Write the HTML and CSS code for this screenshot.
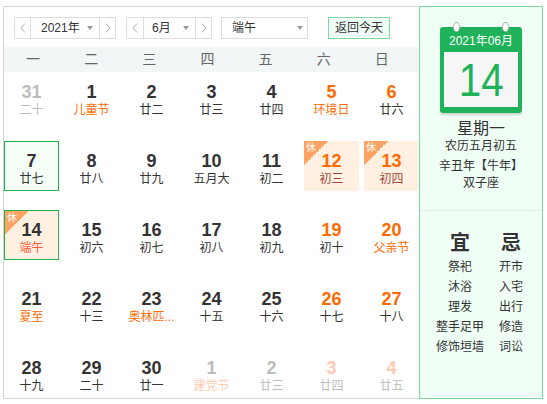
FILE: index.html
```html
<!DOCTYPE html>
<html lang="zh-CN">
<head>
<meta charset="utf-8">
<title>万年历</title>
<link rel="stylesheet" href="styles.css">
</head>
<body>
<div class="cal">
  <div class="main">
    <div class="toolbar">
      <div class="group year">
        <span class="arrow"><svg width="6" height="10" viewBox="0 0 6 10"><polyline points="5,0.5 1,5 5,9.5" fill="none" stroke="#aaa" stroke-width="1"/></svg></span>
        <span class="sel"><span>2021年</span><span class="caret"></span></span>
        <span class="arrow"><svg width="6" height="10" viewBox="0 0 6 10"><polyline points="1,0.5 5,5 1,9.5" fill="none" stroke="#aaa" stroke-width="1"/></svg></span>
      </div>
      <div class="group month">
        <span class="arrow wide"><svg width="6" height="10" viewBox="0 0 6 10"><polyline points="5,0.5 1,5 5,9.5" fill="none" stroke="#aaa" stroke-width="1"/></svg></span>
        <span class="sel"><span>6月</span><span class="caret"></span></span>
        <span class="arrow"><svg width="6" height="10" viewBox="0 0 6 10"><polyline points="1,0.5 5,5 1,9.5" fill="none" stroke="#aaa" stroke-width="1"/></svg></span>
      </div>
      <div class="festival"><span>端午</span><span class="caret"></span></div>
      <div class="today-btn">返回今天</div>
    </div>
    <div class="week">
      <span>一</span><span>二</span><span>三</span><span>四</span><span>五</span><span>六</span><span>日</span>
    </div>
    <div class="grid">
      <div class="day other"><span class="num">31</span><span class="lunar">二十</span></div>
      <div class="day fest"><span class="num">1</span><span class="lunar">儿童节</span></div>
      <div class="day"><span class="num">2</span><span class="lunar">廿二</span></div>
      <div class="day"><span class="num">3</span><span class="lunar">廿三</span></div>
      <div class="day"><span class="num">4</span><span class="lunar">廿四</span></div>
      <div class="day we fest"><span class="num">5</span><span class="lunar">环境日</span></div>
      <div class="day we"><span class="num">6</span><span class="lunar">廿六</span></div>

      <div class="day today"><span class="num">7</span><span class="lunar">廿七</span></div>
      <div class="day"><span class="num">8</span><span class="lunar">廿八</span></div>
      <div class="day"><span class="num">9</span><span class="lunar">廿九</span></div>
      <div class="day"><span class="num">10</span><span class="lunar">五月大</span></div>
      <div class="day"><span class="num">11</span><span class="lunar">初二</span></div>
      <div class="day we rest"><span class="badge">休</span><span class="num">12</span><span class="lunar">初三</span></div>
      <div class="day we rest"><span class="badge">休</span><span class="num">13</span><span class="lunar">初四</span></div>

      <div class="day rest picked fest"><span class="badge">休</span><span class="num">14</span><span class="lunar">端午</span></div>
      <div class="day"><span class="num">15</span><span class="lunar">初六</span></div>
      <div class="day"><span class="num">16</span><span class="lunar">初七</span></div>
      <div class="day"><span class="num">17</span><span class="lunar">初八</span></div>
      <div class="day"><span class="num">18</span><span class="lunar">初九</span></div>
      <div class="day we"><span class="num">19</span><span class="lunar">初十</span></div>
      <div class="day we fest"><span class="num">20</span><span class="lunar">父亲节</span></div>

      <div class="day fest"><span class="num">21</span><span class="lunar">夏至</span></div>
      <div class="day"><span class="num">22</span><span class="lunar">十三</span></div>
      <div class="day fest"><span class="num">23</span><span class="lunar" title="奥林匹克日">奥林匹...</span></div>
      <div class="day"><span class="num">24</span><span class="lunar">十五</span></div>
      <div class="day"><span class="num">25</span><span class="lunar">十六</span></div>
      <div class="day we"><span class="num">26</span><span class="lunar">十七</span></div>
      <div class="day we"><span class="num">27</span><span class="lunar">十八</span></div>

      <div class="day"><span class="num">28</span><span class="lunar">十九</span></div>
      <div class="day"><span class="num">29</span><span class="lunar">二十</span></div>
      <div class="day"><span class="num">30</span><span class="lunar">廿一</span></div>
      <div class="day other fest"><span class="num">1</span><span class="lunar">建党节</span></div>
      <div class="day other"><span class="num">2</span><span class="lunar">廿三</span></div>
      <div class="day other we"><span class="num">3</span><span class="lunar">廿四</span></div>
      <div class="day other we"><span class="num">4</span><span class="lunar">廿五</span></div>
    </div>
  </div>
  <div class="side">
    <div class="side-top">
      <div class="pcal">
        <span class="ring ring-l"></span>
        <span class="ring ring-r"></span>
        <div class="pcal-head">2021年06月</div>
        <div class="pcal-body"><span class="big">14</span></div>
      </div>
      <div class="weekday">星期一</div>
      <div class="info first">农历五月初五</div>
      <div class="info ganzhi">辛丑年【牛年】</div>
      <div class="info zodiac">双子座</div>
    </div>
    <div class="side-bottom">
      <div class="yj yi">
        <div class="yj-title">宜</div>
        <div class="yj-list">
          <div>祭祀</div><div>沐浴</div><div>理发</div><div>整手足甲</div><div>修饰垣墙</div>
        </div>
      </div>
      <div class="yj ji">
        <div class="yj-title">忌</div>
        <div class="yj-list">
          <div>开市</div><div>入宅</div><div>出行</div><div>修造</div><div>词讼</div>
        </div>
      </div>
    </div>
  </div>
</div>
</body>
</html>
```
FILE: styles.css
```css
body {
  margin: 0;
  background: #fff;
  color: #333;
  font-family: "Liberation Sans", "Noto Sans CJK SC", sans-serif;
}

.cal {
  display: flex;
  margin: 6px 0 0 3px;
  width: 539px;
  height: 391px;
  border: 1px solid #d4d4d4;
  border-right: 0;
}

.main {
  width: 415px;
  height: 391px;
  overflow: hidden;
}

/* toolbar */
.toolbar {
  display: flex;
  align-items: center;
  height: 22px;
  margin: 10px 0 8px 10px;
  font-size: 12px;
}

.group {
  display: flex;
  height: 22px;
  box-sizing: border-box;
  border: 1px solid #dddddd;
  background: #fff;
}

.arrow {
  width: 15px;
  display: flex;
  align-items: center;
  justify-content: center;
}

.arrow.wide {
  width: 16px;
}

.sel,
.festival {
  display: flex;
  align-items: center;
  justify-content: space-between;
  box-sizing: border-box;
  padding: 0 6px 0 10px;
  line-height: 20px;
  color: #333;
}

.sel {
  border-left: 1px solid #dddddd;
  border-right: 1px solid #dddddd;
}

.year .sel {
  width: 70px;
}

.month {
  margin-left: 10px;
}

.month .sel {
  width: 53px;
  padding-left: 8px;
}

.festival {
  width: 87px;
  height: 22px;
  margin-left: 9px;
  border: 1px solid #dddddd;
  padding-right: 4px;
}

.caret {
  width: 0;
  height: 0;
  border-left: 3px solid transparent;
  border-right: 3px solid transparent;
  border-top: 4px solid #9a9a9a;
}

.today-btn {
  margin-left: 20px;
  width: 62px;
  height: 22px;
  box-sizing: border-box;
  border: 1px solid #80d9a3;
  background: #f2fff6;
  text-align: center;
  line-height: 20px;
  font-size: 12px;
  color: #333;
}

/* weekday header */
.week {
  display: grid;
  grid-template-columns: repeat(7, 58.14px);
  height: 25px;
  align-items: center;
  background: #f2f6f6;
  font-size: 14px;
  color: #666;
  text-align: center;
  line-height: 25px;
}

/* day grid */
.grid {
  display: grid;
  grid-template-columns: repeat(7, 55px);
  grid-auto-rows: 50px;
  column-gap: 5px;
  row-gap: 19px;
}

.day {
  position: relative;
  box-sizing: border-box;
  padding-top: 9px;
  text-align: center;
}

.num {
  display: block;
  font-size: 18px;
  font-weight: bold;
  line-height: 22px;
  color: #333;
}

.lunar {
  display: block;
  font-size: 12px;
  line-height: 14px;
  white-space: nowrap;
  color: #333;
}

.we .num {
  color: #ff6a00;
}

.fest .lunar {
  color: #ff6a00;
}

.other .num,
.other .lunar {
  color: #bdbdbd;
}

.other.we .num,
.other.fest .lunar {
  color: #ffcbb0;
}

.rest {
  background: #fff0e1;
}

.rest .lunar {
  color: #9a4a3c;
}

.rest.fest .lunar {
  color: #ff5a3a;
}

.today {
  border: 1px solid #22b24c;
  background: #f5fff8;
  padding-top: 8px;
}

.picked {
  border: 1px solid #22b24c;
  padding-top: 8px;
}

.badge {
  position: absolute;
  left: 0;
  top: 0;
  width: 24px;
  height: 24px;
  box-sizing: border-box;
  padding: 1px 0 0 2px;
  background: linear-gradient(135deg, #ffa364 50%, transparent 50%);
  color: #fff;
  font-size: 10px;
  line-height: 12px;
  text-align: left;
}

/* side panel */
.side {
  width: 124px;
  height: 393px;
  margin: -1px 0;
  box-sizing: border-box;
  border: 1px solid #7dd8a2;
  background: #f0fff5;
}

.side-top {
  height: 204px;
  box-sizing: border-box;
  padding-top: 20px;
  border-bottom: 1px solid #d6f3e0;
  display: flex;
  flex-direction: column;
  align-items: center;
}

.pcal {
  position: relative;
  width: 82px;
  height: 86px;
  box-sizing: border-box;
  padding: 0 4px 6px;
  background: #1fb25a;
  border-radius: 3px;
  box-shadow: 0 2px 2px rgba(0, 0, 0, 0.15);
}

.ring {
  position: absolute;
  top: -5px;
  width: 7px;
  height: 10px;
  box-sizing: border-box;
  border-radius: 50%;
  border: 1px solid #b0b0b0;
  background: #fff;
}

.ring-l {
  left: 13px;
}

.ring-r {
  left: 62px;
}

.pcal-head {
  height: 25px;
  line-height: 28px;
  color: #fff;
  font-size: 12px;
  text-align: center;
}

.pcal-body {
  height: 55px;
  background: #f6f6f6;
  text-align: center;
  line-height: 55px;
  color: #1fb25a;
  font-size: 47px;
}

.big {
  display: inline-block;
  transform: scaleX(0.86);
}

.weekday {
  margin-top: 7px;
  font-size: 16px;
  line-height: 18px;
  color: #333;
}

.info {
  font-size: 12px;
  line-height: 14px;
  color: #333;
}

.info.first {
  margin-top: 1px;
}

.info.ganzhi {
  margin-top: 6px;
}

.info.zodiac {
  margin-top: 3px;
}

.side-bottom {
  display: flex;
  padding: 19px 0 0 14px;
}

.yj {
  text-align: center;
}

.yi {
  width: 52px;
}

.ji {
  width: 50px;
}

.yj-title {
  font-size: 20px;
  font-weight: bold;
  line-height: 26px;
  color: #333;
}

.yj-list {
  margin-top: 1px;
  font-size: 12px;
  line-height: 20px;
  color: #333;
}
```
